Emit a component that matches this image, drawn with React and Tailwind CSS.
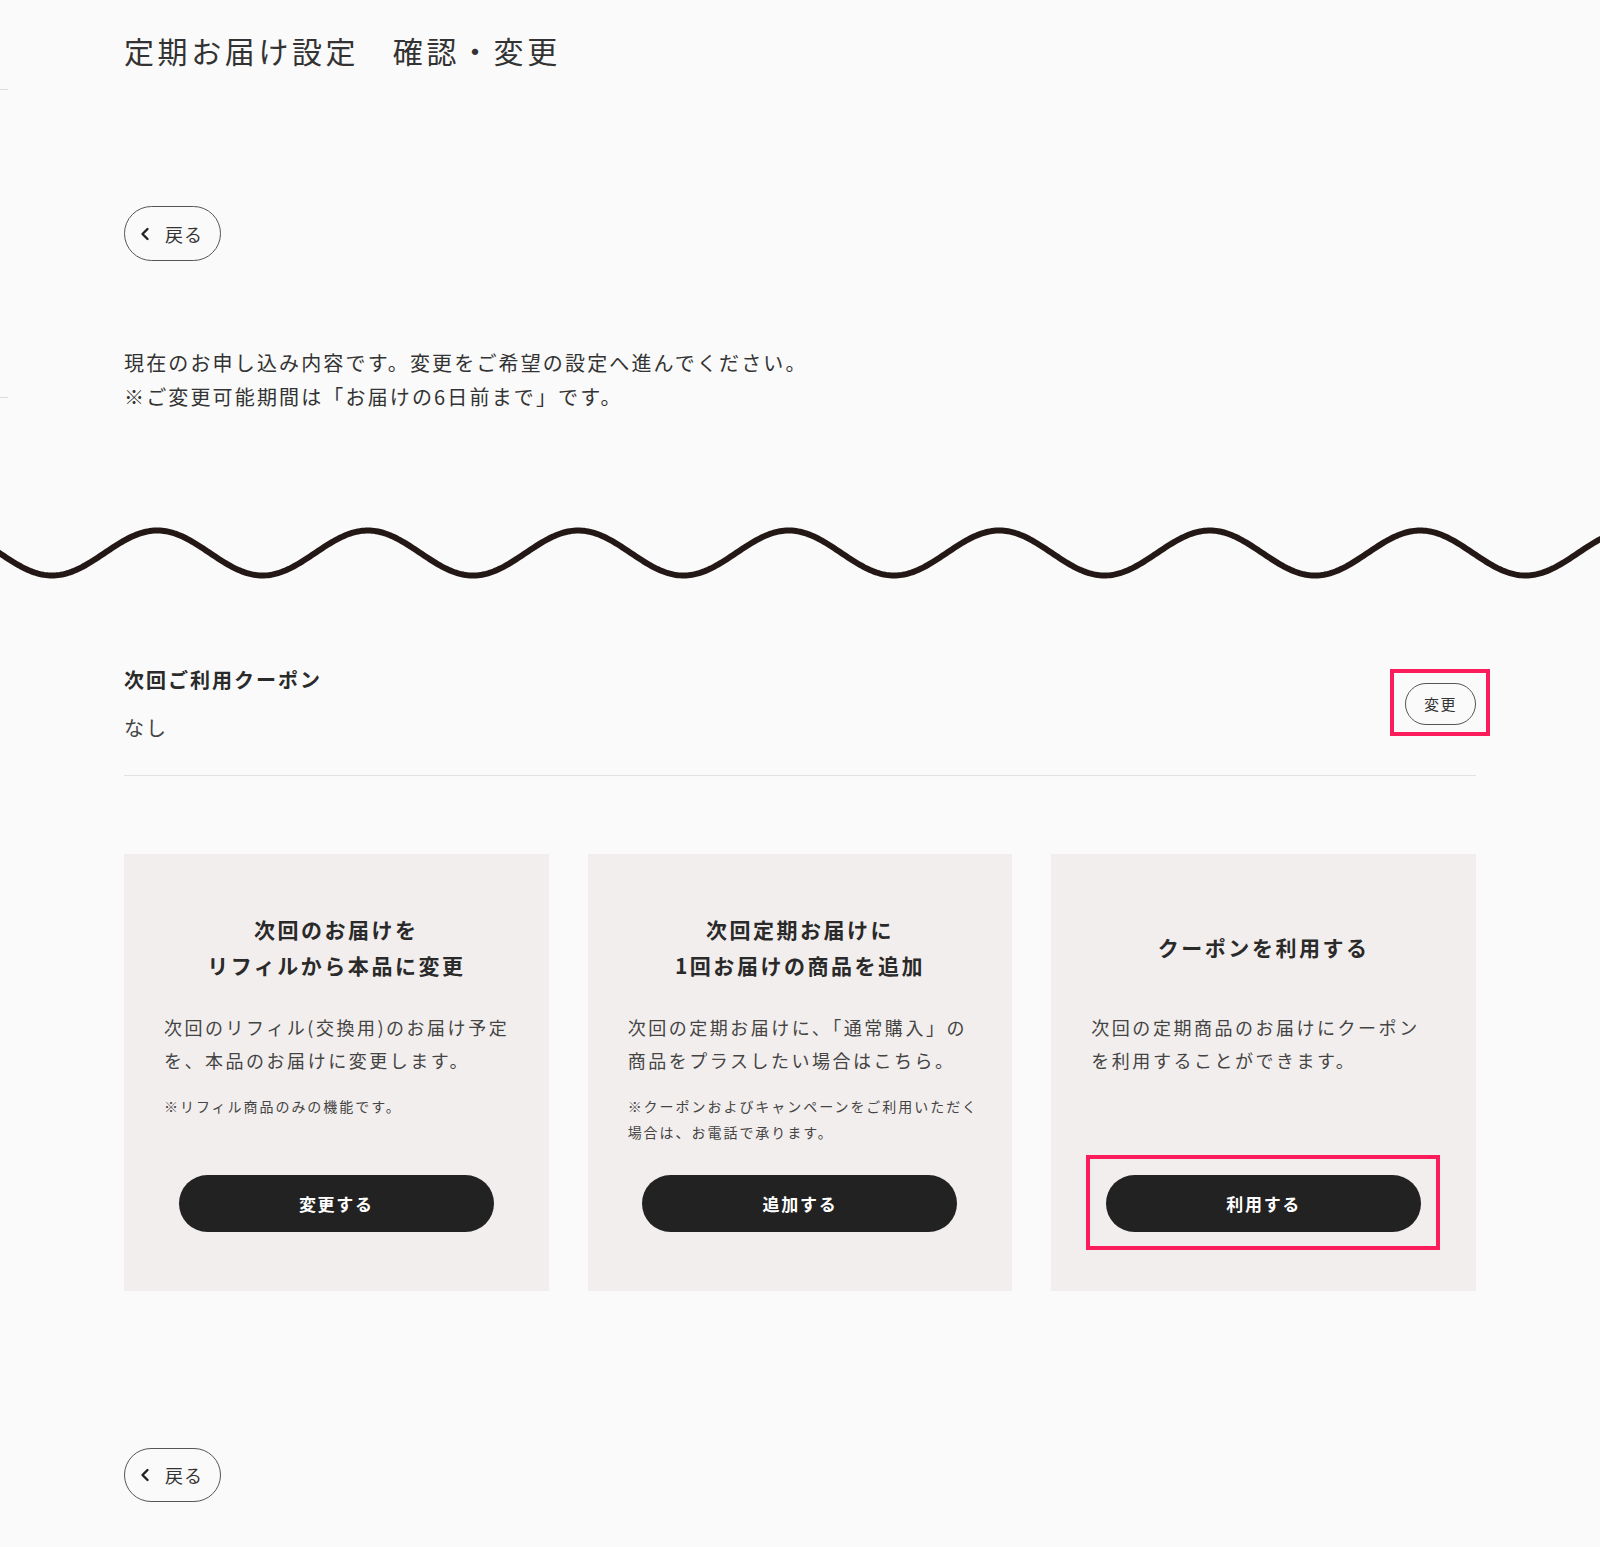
import React from "react";

const FONT = { fontFamily: '"Noto Sans CJK JP", "Noto Sans", sans-serif' };

function wavePath() {
  const pts = [];
  for (let x = -10; x <= 1610; x += 2) {
    const y = 40 + 22.5 * Math.cos((2 * Math.PI * (x - 52)) / 210.5);
    pts.push(`${x === -10 ? "M" : "L"}${x} ${y.toFixed(2)}`);
  }
  return pts.join(" ");
}

function BackButton({ h }) {
  return (
    <button
      className={`flex items-center justify-center gap-[15px] w-[97px] ${h} rounded-full border border-[#555] bg-transparent text-[#333]`}
    >
      <svg width="10" height="14" viewBox="0 0 10 14" className="-ml-[2px]">
        <path d="M7.5 2 L2.5 7 L7.5 12" fill="none" stroke="#222" strokeWidth="2.4" strokeLinecap="round" strokeLinejoin="round" />
      </svg>
      <span className="text-[18px] tracking-[0.06em] leading-none">戻る</span>
    </button>
  );
}

function Card({ title, desc, note, btn, highlight }) {
  return (
    <div className="h-[437px] bg-[#f2eeed] flex flex-col pt-[57px] pb-[59px] px-[40px]">
      <div className="h-[72px] flex items-center justify-center text-center">
        <h3 className="text-[21px] font-bold leading-[36px] tracking-[0.12em] text-[#2a2a2a]">{title}</h3>
      </div>
      <p className="mt-[28px] text-[18px] leading-[32.6px] tracking-[0.14em] text-[#444] whitespace-nowrap">{desc}</p>
      {note && (
        <p className="mt-[18px] text-[14px] leading-[25.7px] tracking-[0.14em] text-[#444] whitespace-nowrap">{note}</p>
      )}
      <div className="mt-auto relative w-[315px] mx-auto">
        <button className="w-[315px] h-[57px] rounded-full bg-[#222] text-white text-[17px] font-bold tracking-[0.1em]">
          {btn}
        </button>
        {highlight && (
          <div className="absolute -left-[20px] -right-[19px] -top-[20px] -bottom-[18px] border-[4px] border-[#fc1c5c] pointer-events-none" />
        )}
      </div>
    </div>
  );
}

export default function App() {
  return (
    <div className="relative min-h-[1547px] bg-[#fafafa] text-[#333] pb-[45px]" style={FONT}>
      <div className="absolute left-0 top-[89px] w-[8px] h-px bg-[#ddd]" />
      <div className="absolute left-0 top-[397px] w-[8px] h-px bg-[#ddd]" />
      <div className="max-w-[1352px] mx-auto pt-[28px]">
        <h1 className="text-[30px] leading-[45px] tracking-[0.12em] text-[#333] font-normal">
          定期お届け設定　確認・変更
        </h1>
        <div className="mt-[133px]">
          <BackButton h="h-[55px]" />
        </div>
        <p className="mt-[85px] text-[20px] leading-[34px] tracking-[2.15px] text-[#333]">
          現在のお申し込み内容です。変更をご希望の設定へ進んでください。
          <br />
          ※ご変更可能期間は「お届けの6日前まで」です。
        </p>
      </div>

      <svg className="block mt-[99px]" width="1600" height="80" viewBox="0 0 1600 80">
        <path d={wavePath()} fill="none" stroke="#231815" strokeWidth="6" />
      </svg>

      <div className="max-w-[1352px] mx-auto">
        <div className="mt-[72px] flex items-center justify-between pb-[32px] border-b border-[#e2e2e2]">
          <div>
            <div className="text-[20px] font-bold leading-[30px] tracking-[0.1em] text-[#2a2a2a]">次回ご利用クーポン</div>
            <div className="mt-[18px] text-[20px] leading-[30px] tracking-[0.1em] text-[#444]">なし</div>
          </div>
          <div className="relative">
            <button className="w-[71px] h-[42px] rounded-full border border-[#555] text-[15px] tracking-[0.1em] text-[#333] bg-transparent">
              変更
            </button>
            <div className="absolute -left-[15px] -right-[14px] -top-[14px] -bottom-[11px] border-[4px] border-[#fc1c5c] pointer-events-none" />
          </div>
        </div>

        <div className="mt-[78px] grid grid-cols-3 gap-[39px]">
          <Card
            title={<>次回のお届けを<br />リフィルから本品に変更</>}
            desc={<>次回のリフィル(交換用)のお届け予定<br />を、本品のお届けに変更します。</>}
            note={<>※リフィル商品のみの機能です。</>}
            btn="変更する"
          />
          <Card
            title={<>次回定期お届けに<br />1回お届けの商品を追加</>}
            desc={<>次回の定期お届けに、「通常購入」の<br />商品をプラスしたい場合はこちら。</>}
            note={<>※クーポンおよびキャンペーンをご利用いただく<br />場合は、お電話で承ります。</>}
            btn="追加する"
          />
          <Card
            title={<>クーポンを利用する</>}
            desc={<>次回の定期商品のお届けにクーポン<br />を利用することができます。</>}
            btn="利用する"
            highlight
          />
        </div>

        <div className="mt-[157px]">
          <BackButton h="h-[54px]" />
        </div>
      </div>
    </div>
  );
}
